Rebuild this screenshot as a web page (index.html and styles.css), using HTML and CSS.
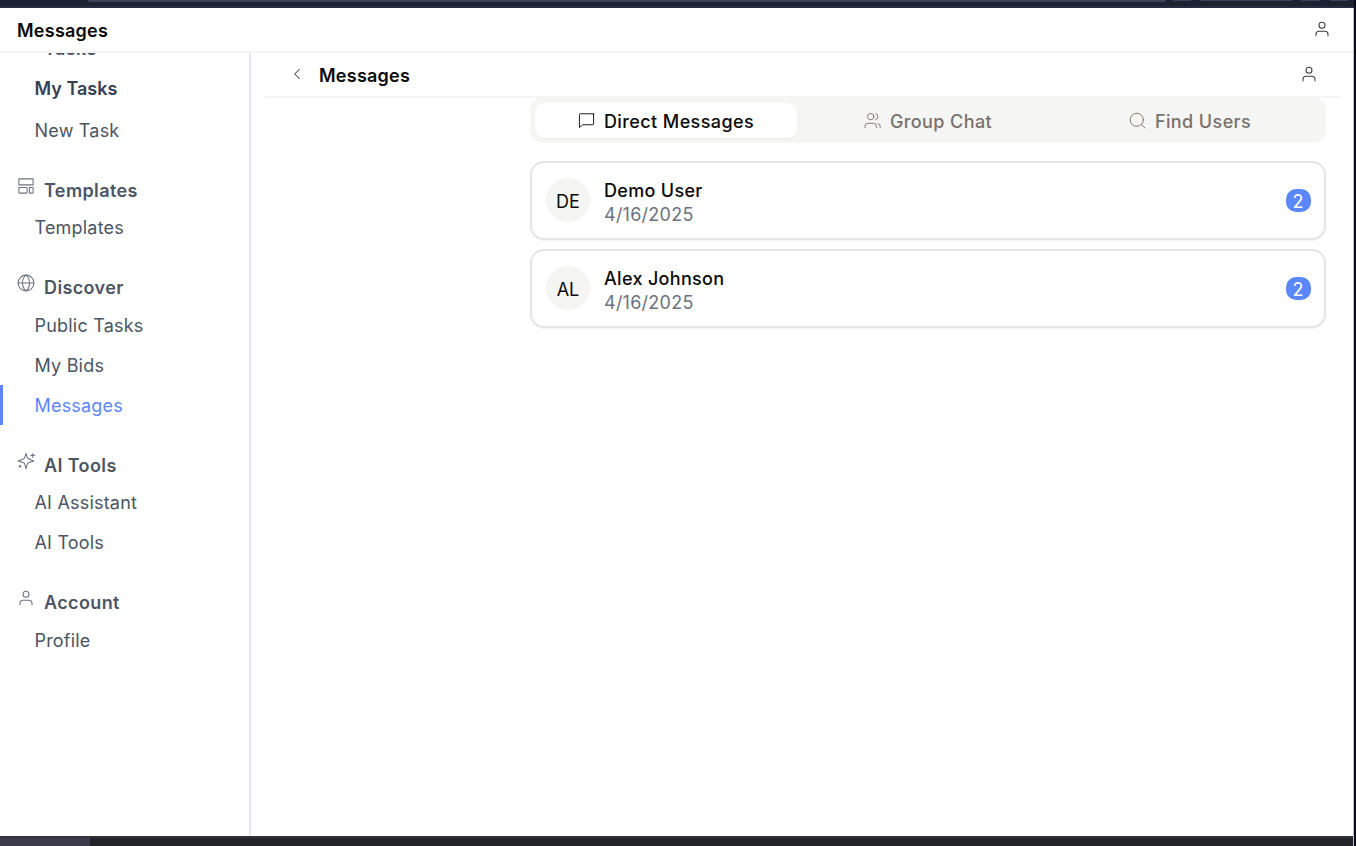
FILE: index.html
```html
<!DOCTYPE html>
<html lang="en">
<head>
<meta charset="utf-8">
<title>Messages</title>
<link rel="stylesheet" href="styles.css">
</head>
<body>
<svg class="defs" width="0" height="0">
  <symbol id="user" viewBox="0 0 24 24"><circle cx="12" cy="7" r="4"/><path d="M20 21v-2a4 4 0 0 0-4-4H8a4 4 0 0 0-4 4v2"/></symbol>
</svg>
<div class="desktop">
  <div class="window">
    <div class="chrome-top"><i class="seg seg-a"></i><i class="seg seg-b"></i><i class="seg seg-c"></i><i class="seg seg-d"></i><i class="seg seg-e"></i></div>
    <header class="topbar">
      <h1 class="title">Messages</h1>
      <svg class="icon dark"><use href="#user"/></svg>
    </header>
    <div class="body">
      <nav class="sidebar">
        <section class="group tasks">
          <h2 class="heading"><span class="icon-space"></span><span class="label">Tasks</span></h2>
          <a class="item strong"><span>My Tasks</span></a>
          <a class="item"><span>New Task</span></a>
        </section>
        <section class="group">
          <h2 class="heading"><svg class="icon" viewBox="0 0 24 24"><rect x="2.5" y="2.5" width="19" height="8"/><rect x="2.5" y="14" width="11" height="7.5" rx=".7"/><rect x="16.5" y="14" width="5" height="7.5" rx=".7"/></svg><span class="label">Templates</span></h2>
          <a class="item"><span>Templates</span></a>
        </section>
        <section class="group">
          <h2 class="heading"><svg class="icon" viewBox="0 0 24 24"><circle cx="12" cy="12" r="10.5"/><path d="M12 1.5C5.800 6 5.800 18 12 22.500C18.200 18 18.200 6 12 1.500M1.500 12h21"/></svg><span class="label">Discover</span></h2>
          <a class="item"><span>Public Tasks</span></a>
          <a class="item"><span>My Bids</span></a>
          <a class="item active"><span>Messages</span></a>
        </section>
        <section class="group">
          <h2 class="heading"><svg class="icon" viewBox="0 0 24 24"><path d="M12 2l-1.900 5.800a2 2 0 0 1-1.300 1.300L1.500 12l7.300 2.300a2 2 0 0 1 1.300 1.300L12 22.500l1.900-6.900a2 2 0 0 1 1.300-1.300L22.500 12l-7.300-2.900a2 2 0 0 1-1.300-1.300zM21 2v5M18.500 4.500h5M4 17.500v3M2.500 19h3"/></svg><span class="label">AI Tools</span></h2>
          <a class="item"><span>AI Assistant</span></a>
          <a class="item"><span>AI Tools</span></a>
        </section>
        <section class="group">
          <h2 class="heading"><svg class="icon"><use href="#user"/></svg><span class="label">Account</span></h2>
          <a class="item"><span>Profile</span></a>
        </section>
      </nav>
      <main class="main">
        <div class="subbar">
          <svg class="icon dark" viewBox="0 0 24 24"><path d="M15 18l-6-6 6-6"/></svg>
          <h2 class="title">Messages</h2>
          <svg class="icon dark end" viewBox="0 0 24 24"><use href="#user"/></svg>
        </div>
        <div class="content">
          <div class="tabs">
            <button class="tab selected"><svg class="icon" viewBox="0 0 24 24"><path d="M22 2.500v14.500a1 1 0 0 1-1 1H6.500L2 22V3.500a1 1 0 0 1 1-1h18a1 1 0 0 1 1 1z"/></svg><span>Direct Messages</span></button>
            <button class="tab"><svg class="icon" viewBox="0 0 24 24"><circle cx="9.500" cy="6.500" r="4.500"/><path d="M17.500 22v-2a4 4 0 0 0-4-4h-8a4 4 0 0 0-4 4v2M22.800 22v-2a4 4 0 0 0-3-3.800M16.500 2.200a4.500 4.500 0 0 1 0 8.600"/></svg><span>Group Chat</span></button>
            <button class="tab"><svg class="icon" viewBox="0 0 24 24"><circle cx="11" cy="11" r="9.300"/><path d="M22.500 22.500l-4.800-4.800"/></svg><span>Find Users</span></button>
          </div>
          <article class="card">
            <div class="avatar">DE</div>
            <div class="info"><div class="name">Demo User</div><div class="date">4/16/2025</div></div>
            <span class="badge">2</span>
          </article>
          <article class="card">
            <div class="avatar">AL</div>
            <div class="info"><div class="name">Alex Johnson</div><div class="date">4/16/2025</div></div>
            <span class="badge">2</span>
          </article>
        </div>
      </main>
    </div>
    <div class="chrome-bottom"><i class="status"></i></div>
  </div>
</div>
</body>
</html>
```
FILE: styles.css
```css
* { box-sizing: border-box; }
body { margin: 0; font-family: Inter, "Liberation Sans", sans-serif; font-size: 18px; letter-spacing: .25px; color: #0c0a09; -webkit-font-smoothing: antialiased; }
h1, h2 { margin: 0; font-size: 18px; font-weight: 600; }
.defs { display: none; }
.desktop { height: 846px; background: #060a1c; padding-right: 2px; overflow: hidden; }
.window { height: 846px; display: flex; flex-direction: column; background: #fff; border-right: 1px solid #bfc2ca; }
.chrome-top { height: 8px; flex: none; background: #1d2233; border-bottom: 2px solid #282c40; display: flex; padding-left: 88px; margin-right: -1px; }
.seg { height: 2px; background: #3d435a; border-radius: 0 0 3px 3px; flex: none; }
.seg-a { width: 1078px; margin-right: 7px; }
.seg-b, .seg-c, .seg-d, .seg-e { height: 1px; }
.seg-b { width: 18px; margin-right: 9px; }
.seg-c { width: 92px; margin-right: 9px; }
.seg-d { width: 19px; margin-right: 10px; }
.seg-e { width: 18px; }
.topbar { height: 45px; flex: none; border-bottom: 2px solid #f3f4f6; display: flex; align-items: center; justify-content: space-between; padding: 0 22px 0 17px; }
.topbar .icon { margin-bottom: 2px; }
.title { line-height: 24px; padding-top: 2px; }
.icon { width: 18px; height: 18px; flex: none; fill: none; stroke: currentColor; stroke-width: 1.4; stroke-linecap: round; stroke-linejoin: round; overflow: visible; }
.dark { color: #3f3d3b; }
.body { flex: 1; min-height: 0; display: flex; }
.sidebar { width: 251px; flex: none; border-right: 2px solid #e5e7eb; overflow: hidden; color: #4b5563; }
.group { margin-bottom: 22.5px; }
.tasks { margin-top: -22px; }
.heading { height: 35px; display: flex; align-items: center; padding-left: 17px; gap: 9px; letter-spacing: .38px; }
.heading .icon { color: #6b7280; margin-bottom: 9px; }
.icon-space { width: 18px; }
.item { height: 40px; display: flex; align-items: center; padding-left: 34.5px; letter-spacing: .2px; }
.tasks .item { margin-top: 2px; }
.strong { font-weight: 600; color: #374151; letter-spacing: 0; }
.active { border-left: 3px solid #5b87fa; padding-left: 31.5px; color: #5b87fa; }
.main { flex: 1; padding: 0 13px 0 14px; }
.subbar { height: 45px; border-bottom: 2px solid #f3f4f6; display: flex; align-items: center; padding: 0 22px 0 23px; }
.subbar .title { margin-left: 13px; }
.subbar .icon { margin-bottom: 2px; }
.end { margin-left: auto; }
.content { padding: 0 14px 0 265px; }
.tabs { height: 46px; margin-top: -1px; margin-bottom: 18px; background: #f5f5f4; border-radius: 13px; padding: 6px 5px 5px; display: grid; grid-template-columns: repeat(3, 1fr); }
.tab { border: 0; background: none; font: inherit; font-weight: 500; letter-spacing: .4px; color: #78716c; display: flex; align-items: center; justify-content: center; gap: 9px; padding: 2px 0 0; border-radius: 9px; }
.tab .icon { width: 17px; height: 17px; stroke-width: 1.3; margin-bottom: 2px; }
.selected { background: #fff; color: #0c0a09; box-shadow: 0 1px 2px rgba(0, 0, 0, .05); }
.card { height: 79px; margin-bottom: 9px; border: 2px solid #e5e5e5; border-radius: 14px; box-shadow: 0 1px 2px rgba(0, 0, 0, .05); display: flex; align-items: center; padding: 0 13px 0 14px; }
.avatar { width: 44px; height: 44px; border-radius: 50%; background: #f5f5f4; display: flex; align-items: center; justify-content: center; padding-top: 3px; letter-spacing: 0; margin-bottom: 1px; }
.info { margin-left: 14px; line-height: 24px; padding-top: 4px; }
.name { font-weight: 500; letter-spacing: .32px; }
.date { color: #6b7280; }
.badge { margin-left: auto; width: 25px; height: 23px; border-radius: 10px; background: #5b87fa; color: #fff; display: flex; align-items: center; justify-content: center; letter-spacing: 0; padding: 2px 1px 0 0; }
.chrome-bottom { height: 10px; flex: none; background: #212429; border-top: 2px solid #303238; display: flex; }
.status { width: 90px; background: #3a3c49; }
```
